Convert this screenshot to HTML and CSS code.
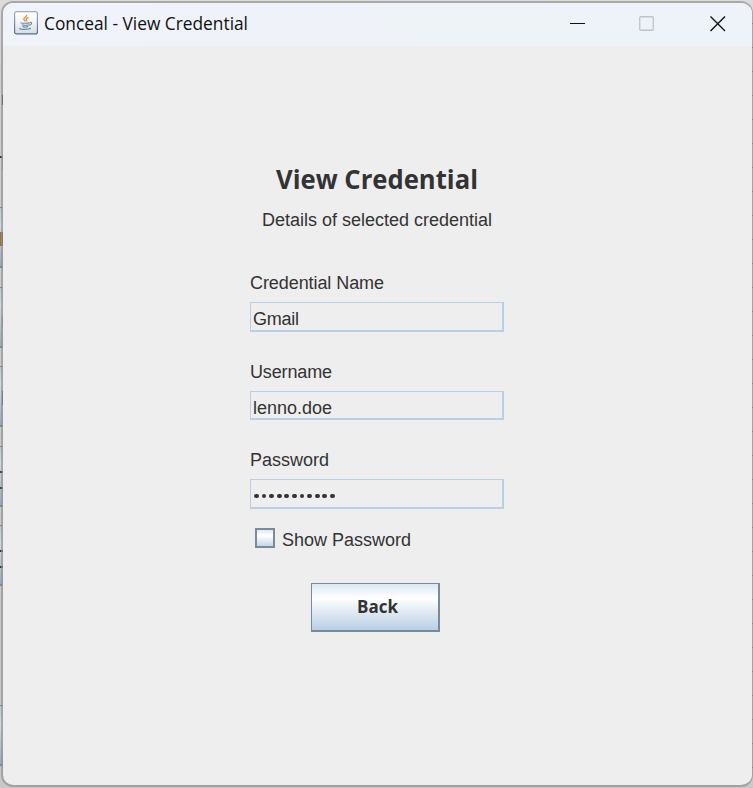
FILE: index.html
```html
<!DOCTYPE html>
<html lang="en">
<head>
<meta charset="utf-8">
<title>Conceal - View Credential</title>
<link rel="stylesheet" href="styles.css">
</head>
<body>
<div class="backdrop">
  <div class="edge">
    <i class="mark"></i>
    <i class="line"></i>
    <b></b><b class="warm"></b><b class="cool"></b><b class="dark"></b><b class="dark"></b><b class="last"></b>
  </div>
  <div class="rows"></div>
</div>
<main class="window">
  <header class="titlebar">
    <svg class="java" width="24" height="24" viewBox="0 0 24 24" fill="none">
      <defs><linearGradient id="g" x1="0" y1="0" x2="0" y2="1"><stop stop-color="#fff"/><stop offset=".5" stop-color="#f1f3f5"/><stop offset="1" stop-color="#d5dde5"/></linearGradient>
      <linearGradient id="s" x1="0" y1="0" x2="0" y2="1"><stop stop-color="#a4acb3"/><stop offset="1" stop-color="#54708c"/></linearGradient></defs>
      <rect x=".6" y=".6" width="22.8" height="22.3" rx="2" fill="url(#g)" stroke="url(#s)" stroke-width="1.2"/>
      <path d="M12.700 3.800c.9 2-3.300 2.800-2.900 4.500.2.900 1.300 1.300 1.500 2.200M14.500 6.600c-1.600.6-2.800 1.200-2.200 2.100.4.600.7.900 0 1.700" stroke="#ed8b35" stroke-width="1.300"/>
      <path d="M7 11.500c-1.200.8 6.800 1 8.800.2M7.800 13.700c2.200.7 5.300.6 7.200 0M8.500 15.500c1.800.6 4.200.6 5.800 0M16 11.400c2.500-.4 2 2.200-.8 3M6.700 17.200c-4.200 1.300 7.800 1.700 10.100.1" stroke="#6489a5" stroke-width="1.100"/>
    </svg>
    <svg class="caption" width="210" height="28"><text x="0" y="19" textLength="204" lengthAdjust="spacingAndGlyphs">Conceal - View Credential</text></svg>
    <div class="controls">
      <svg width="16" height="16"><path d="M0 7.500h15" stroke="#111"/></svg>
      <svg width="16" height="16"><rect x=".75" y=".75" width="13.500" height="13.500" rx="1" fill="none" stroke="#c0c3c8" stroke-width="1.300"/></svg>
      <svg class="close" width="16" height="16"><path d="M.5.500l14.500 14.500M15 .5L.5 15" stroke="#111" stroke-width="1.400"/></svg>
    </div>
  </header>
  <section class="content">
    <svg class="heading" width="210" height="36"><text x="0" y="26" textLength="202" lengthAdjust="spacingAndGlyphs">View Credential</text></svg>
    <svg class="plain subtitle" width="232" height="24"><text x="0" y="17" textLength="230">Details of selected credential</text></svg>
    <div class="form">
      <div class="group">
        <svg class="plain" width="250" height="24"><text x="0" y="17" textLength="134">Credential Name</text></svg>
        <div class="field"><svg class="plain" width="240" height="24"><text x="0" y="17" textLength="46">Gmail</text></svg></div>
      </div>
      <div class="group">
        <svg class="plain" width="250" height="24"><text x="0" y="17" textLength="82">Username</text></svg>
        <div class="field short"><svg class="plain" width="240" height="24"><text x="0" y="17" textLength="79">lenno.doe</text></svg></div>
      </div>
      <div class="group">
        <svg class="plain" width="250" height="24"><text x="0" y="17" textLength="79">Password</text></svg>
        <div class="field"><div class="dots"><i></i><i></i><i></i><i></i><i></i><i></i><i></i><i></i><i></i><i></i><i></i></div></div>
      </div>
      <label class="check"><span class="box"></span><svg class="plain" width="140" height="24"><text x="0" y="18" textLength="129">Show Password</text></svg></label>
    </div>
    <button class="back"><svg width="42" height="24"><text x="0" y="18" textLength="41" lengthAdjust="spacingAndGlyphs">Back</text></svg></button>
  </section>
</main>
</body>
</html>
```
FILE: styles.css
```css
* { box-sizing: border-box; }
body { margin: 0; width: 753px; height: 788px; overflow: hidden; position: relative; background: #d3d3d3; }
svg { display: block; flex: none; overflow: visible; }
.backdrop { height: 788px; display: flex; justify-content: space-between; background: linear-gradient(#dcdcdc, #cfcfcf 80px, #c8c8c8); }
.edge { width: 3px; display: flex; flex-direction: column; }
.edge .mark { width: 1px; height: 10px; margin: 95px 0 51px 2px; background: #252525; }
.edge .line { height: 14px; margin-bottom: 37px; border-top: 2px solid #333; border-right: 1px solid #c39c6c; }
.edge b { height: 61px; margin-bottom: 18.500px; flex: none; border-top: 1px solid #798899; border-bottom: 2px solid #798899; background: linear-gradient(#b9c9d7, #d4dbe1 30%, #97adc3); }
.edge b::before { content: ""; display: block; width: 3px; height: 14px; margin-top: 24px; }
.edge b:nth-of-type(1)::before { background: linear-gradient(90deg, #a8712f 66%, #38516c 66%); }
.edge .warm::before { width: 1px; height: 11px; margin: 28px 0 0 2px; background: #b98b58; }
.edge .cool::before { background: #3f5267; width: 1px; margin-left: 2px; }
.edge .dark::before { border-top: 2px solid #3f3430; border-bottom: 2px solid #3f3430; }
.edge .last { margin-top: 100px; }
.rows { width: 1px; background: repeating-linear-gradient(transparent 0 23px, #666 23px 24px); }
.window { position: absolute; left: 1px; top: 1px; width: 752px; height: 786px; overflow: hidden; border: 2px solid rgba(145,145,145,.68); border-right-width: 1px; border-radius: 12px; background: #eee; background-clip: padding-box; }
.titlebar { height: 43px; display: flex; align-items: flex-start; background: linear-gradient(90deg, #f0f3f9, #edf3f8); }
.java { margin: 8px 6px 0 11px; }
.caption { margin-top: 8px; font: 18px "Open Sans", "Noto Sans", sans-serif; fill: #111; }
.controls { display: flex; gap: 53px; margin: 13px 0 0 auto; padding-right: 26px; }
.controls .close { margin-left: 2px; }
.content { display: flex; flex-direction: column; align-items: flex-start; height: 739px; padding-top: 117px; }
.heading { margin-left: 273px; font: bold 27px "Open Sans", "Noto Sans", sans-serif; fill: #333; }
.plain { font: 18px "Liberation Sans", Arial, sans-serif; fill: #333; }
.subtitle { margin: 10px 0 0 259px; }
.form { width: 254px; margin: 39px 0 0 247px; }
.group { height: 88.500px; }
.field { width: 254px; height: 30px; margin-top: 6px; padding: 5px 0 0 2px; border: 1px solid #b8cfe5; border-right-width: 2px; border-bottom-width: 2px; }
.field.short { height: 29px; }
.dots { display: flex; gap: 2.800px; padding: 8.500px 0 0 1px; }
.dots i { width: 4.800px; height: 4.800px; border-radius: 50%; background: #333; }
.check { display: flex; margin: -9.500px 0 0 5px; height: 24px; }
.box { width: 20px; height: 20px; margin-right: 7px; border: 2px solid #7a8a99; background: linear-gradient(#dfe8f1, #fff 35%, #c4d6e7); }
.back { display: flex; align-items: center; width: 129px; height: 49px; margin: 31px 0 0 308px; padding: 0 0 0 45px; border: 1px solid #7a8a99; border-right-width: 2px; border-bottom-width: 2px; border-radius: 0; background: linear-gradient(#dde8f3, #fff 31%, #dce7f1 65%, #b8cfe5); font: bold 17px "Open Sans", "Noto Sans", sans-serif; }
.back text { fill: #333; }
```
